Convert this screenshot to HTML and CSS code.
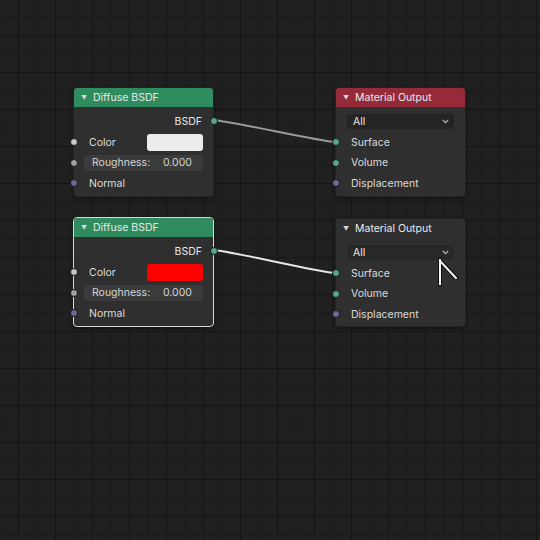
FILE: index.html
```html
<!DOCTYPE html>
<html>
<head>
<meta charset="utf-8">
<link rel="stylesheet" href="styles.css">
</head>
<body>
<div class="editor">
  <svg class="links" width="540" height="540" viewBox="0 0 540 540">
    <path d="M213 120 C 228 120.5, 320 141.5, 335 142" class="link"/>
    <path d="M213 250 C 228 250.5, 320 272.5, 335 273" class="link sel"/>
  </svg>

  <div class="node n1">
    <div class="head green"><span class="tri">▼</span>Diffuse BSDF</div>
    <div class="body">
      <div class="row first out">BSDF<span class="sock sg right"></span></div>
      <div class="row"><span class="sock sc"></span><span class="lbl">Color</span><span class="swatch white"></span></div>
      <div class="row"><span class="sock sr"></span><div class="field"><span>Roughness:</span><span>0.000</span></div></div>
      <div class="row"><span class="sock sv"></span><span class="lbl">Normal</span></div>
    </div>
  </div>

  <div class="node n2">
    <div class="head red"><span class="tri">▼</span>Material Output</div>
    <div class="body">
      <div class="row first"><div class="drop"><span>All</span><svg class="chev" width="7" height="5" viewBox="0 0 7 5"><path d="M0.8 0.8 L3.5 3.6 L6.2 0.8"/></svg></div></div>
      <div class="row"><span class="sock sg"></span><span class="lbl">Surface</span></div>
      <div class="row"><span class="sock sg"></span><span class="lbl">Volume</span></div>
      <div class="row"><span class="sock sv"></span><span class="lbl">Displacement</span></div>
    </div>
  </div>

  <div class="node n3 selected">
    <div class="head green"><span class="tri">▼</span>Diffuse BSDF</div>
    <div class="body">
      <div class="row first out">BSDF<span class="sock sg right"></span></div>
      <div class="row"><span class="sock sc"></span><span class="lbl">Color</span><span class="swatch redsw"></span></div>
      <div class="row"><span class="sock sr"></span><div class="field"><span>Roughness:</span><span>0.000</span></div></div>
      <div class="row"><span class="sock sv"></span><span class="lbl">Normal</span></div>
    </div>
  </div>

  <div class="node n4">
    <div class="head plain"><span class="tri">▼</span>Material Output</div>
    <div class="body">
      <div class="row first"><div class="drop hover"><span>All</span><svg class="chev" width="7" height="5" viewBox="0 0 7 5"><path d="M0.8 0.8 L3.5 3.6 L6.2 0.8"/></svg></div></div>
      <div class="row"><span class="sock sg"></span><span class="lbl">Surface</span></div>
      <div class="row"><span class="sock sg"></span><span class="lbl">Volume</span></div>
      <div class="row"><span class="sock sv"></span><span class="lbl">Displacement</span></div>
    </div>
  </div>

  <svg class="cursor" width="24" height="30" viewBox="0 0 24 30">
    <path d="M3 2 L3 26 M3 3 L19 20" class="cur-shadow"/>
    <path d="M3 2 L3 26 M3 3 L19 20" class="cur"/>
  </svg>
</div>
</body>
</html>
```

FILE: styles.css
```css
html, body {
  margin: 0;
  padding: 0;
}
body {
  width: 540px;
  height: 540px;
  overflow: hidden;
  background: #202020;
  font-family: Inter, "DejaVu Sans", sans-serif;
  font-size: 10.5px;
  color: #dedede;
}
.editor {
  position: relative;
  width: 540px;
  height: 540px;
  background-color: #202020;
  background-image:
    linear-gradient(to right, #151515 0, #151515 1.5px, transparent 1.5px),
    linear-gradient(to bottom, #151515 0, #151515 1.5px, transparent 1.5px),
    linear-gradient(to right, #1a1a1a 0, #1a1a1a 1px, transparent 1px),
    linear-gradient(to bottom, #1a1a1a 0, #1a1a1a 1px, transparent 1px);
  background-size: 37px 37px, 37px 37px, 18.5px 18.5px, 18.5px 18.5px;
  background-position: 18px 35px, 18px 35px, 18px 35px, 18px 35px;
}
.links {
  position: absolute;
  left: 0;
  top: 0;
}
.link {
  fill: none;
  stroke: #9a9a9a;
  stroke-width: 2;
}
.link.sel {
  stroke: #e6e6e6;
}
.node {
  position: absolute;
  background: #2f2f2f;
  border-radius: 4px;
  box-shadow: 0 1px 4px rgba(0,0,0,0.45);
  border: 1px solid #242424;
  box-sizing: border-box;
}
.node.selected {
  border: 1px solid #d8d8d8;
}
.n1 { left: 73px; top: 87px; width: 141px; height: 110px; }
.n2 { left: 335px; top: 87px; width: 131px; height: 110px; }
.n3 { left: 73px; top: 217px; width: 141px; height: 110px; }
.n4 { left: 335px; top: 218px; width: 131px; height: 109px; }

.head {
  height: 19px;
  display: flex;
  align-items: center;
  padding-left: 7px;
  border-radius: 3px 3px 0 0;
  color: #e8e8e8;
}
.head.green { background: #2f8c5f; }
.head.red { background: #952b3a; }
.head.plain { background: #2f2f2f; }
.tri {
  font-size: 6px;
  width: 12px;
  display: inline-block;
  color: #d8d8d8;
}
.body {
  padding-top: 3px;
  display: flex;
  flex-direction: column;
}
.row {
  position: relative;
  height: 20.5px;
  display: flex;
  align-items: center;
  padding: 0 10px 0 15px;
}
.row.first {
  height: 22px;
}
.row.out {
  justify-content: flex-end;
  padding-right: 11px;
  color: #e6e6e6;
}
.lbl {
  flex: 1;
  color: #dcdcdc;
}
.sock {
  position: absolute;
  left: -4px;
  top: 50%;
  width: 6px;
  height: 6px;
  margin-top: -4px;
  border-radius: 50%;
  border: 1px solid #1a1a1a;
}
.sock.right {
  left: auto;
  right: -5px;
}
.sg { background: #57a887; }
.sc { background: #c8c8c8; }
.sr { background: #a2a2a2; }
.sv { background: #6a6a9c; }
.swatch {
  width: 56px;
  height: 17px;
  border-radius: 3px;
}
.white { background: #ececec; }
.redsw { background: #ff0000; }
.field {
  flex: 1;
  margin-left: -5px;
  height: 16px;
  background: #3b3b3b;
  border-radius: 3px;
  display: flex;
  justify-content: space-between;
  align-items: center;
  padding: 0 11px 0 8px;
  color: #d4d4d4;
}
.drop {
  flex: 1;
  margin-left: -4px;
  margin-right: 1px;
  height: 15px;
  background: #242424;
  border-radius: 3px;
  display: flex;
  justify-content: space-between;
  align-items: center;
  padding: 0 5px 0 6px;
  color: #e4e4e4;
}
.drop.hover {
  background: #282828;
}
.chev {
  display: block;
}
.chev path {
  fill: none;
  stroke: #c4c4c4;
  stroke-width: 1.1;
}
.cursor {
  position: absolute;
  left: 437px;
  top: 258px;
}
.cur-shadow {
  fill: none;
  stroke: #111111;
  stroke-width: 4;
  stroke-linecap: square;
}
.cur {
  fill: none;
  stroke: #f2f2f2;
  stroke-width: 2;
  stroke-linecap: square;
}
```
